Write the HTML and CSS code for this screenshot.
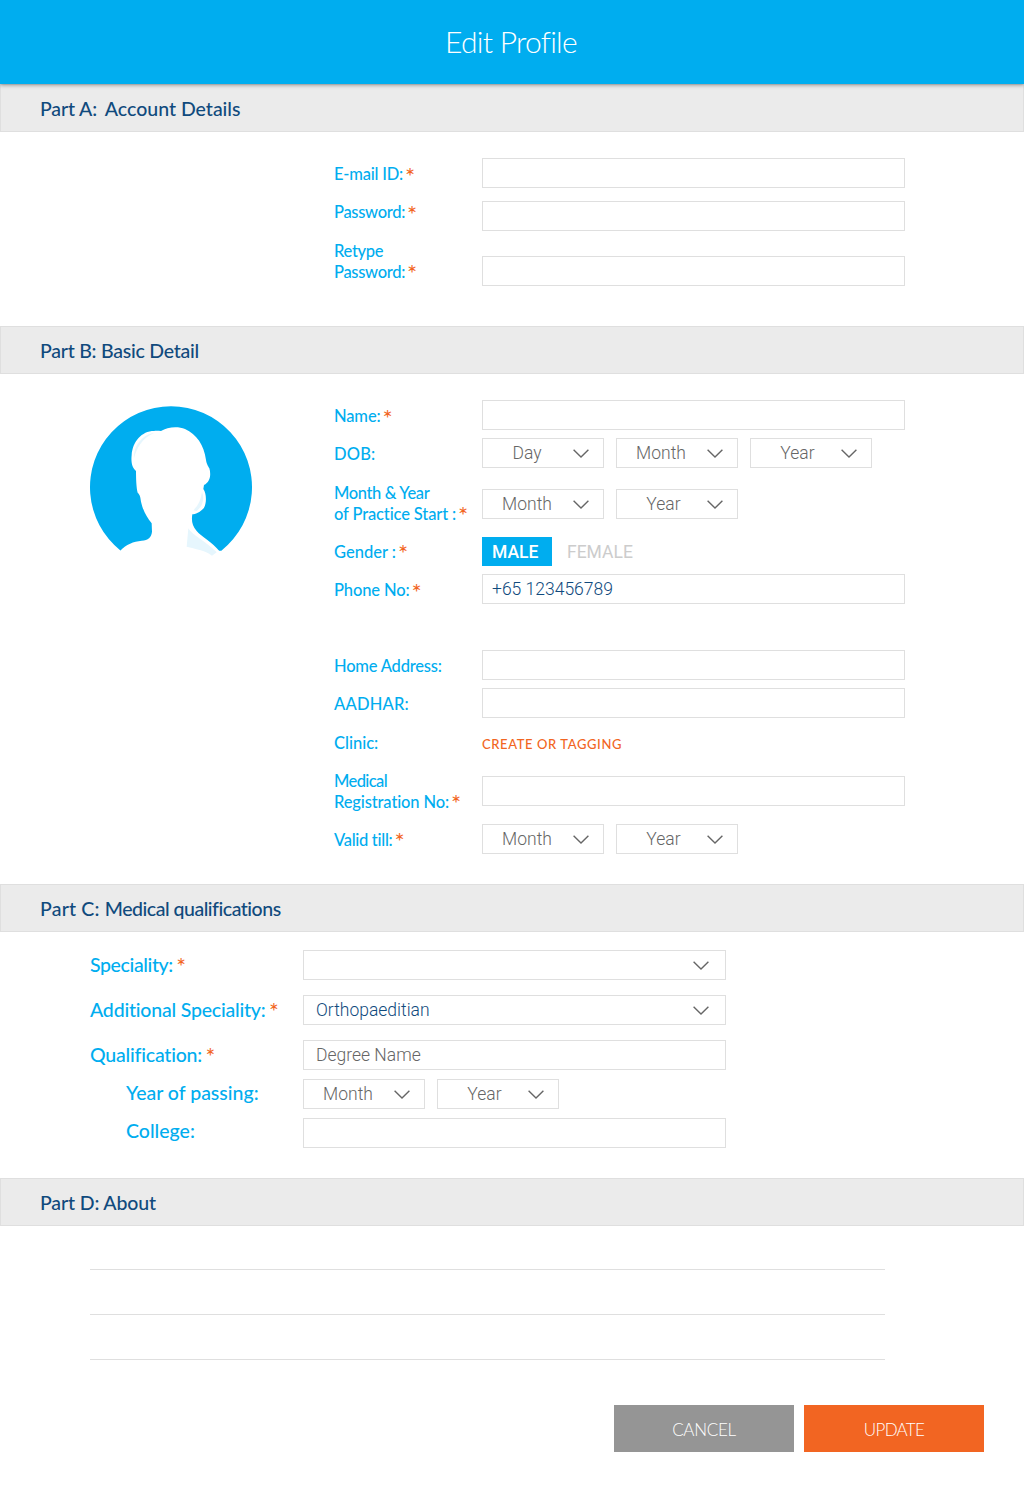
FILE: index.html
```html
<!DOCTYPE html>
<html lang="en">
<head>
<meta charset="utf-8">
<title>Edit Profile</title>
<link rel="stylesheet" href="styles.css">
</head>
<body>
<svg class="defs" width="0" height="0"><symbol id="chev" viewBox="0 0 16 9"><path d="M.6.8 8 8 15.4.8" fill="none" stroke="#666" stroke-width="1.4"/></symbol></svg>
<header class="top"><h1>Edit Profile</h1></header>
<main>
<h2 class="bar"><span class="t1">Part A: </span><span class="account">Account Details</span></h2>
<section class="body part-a">
  <div class="labels">
    <label><span class="t2">E-mail ID:</span><i>*</i></label>
    <label><span class="t3">Password:</span><i>*</i></label>
    <label><span class="t3">Retype</span><br><span class="t3">Password:</span><i>*</i></label>
  </div>
  <div class="controls">
    <div class="box"></div>
    <div class="box g13"></div>
    <div class="box g25"></div>
  </div>
</section>
<h2 class="bar tight">Part B: Basic Detail</h2>
<section class="body part-b">
  <svg class="avatar" viewBox="30 33 486 486"><path fill="#00adef" d="M122 467A243 243 0 1 1 424 467Z"/><path fill="#fff" d="M118 470C140 446 160 440 185 437 205 435 214 428 216 410L215 385C200 365 190 350 183 320 181 305 180 300 173 293 169 280 168 250 168 228 155 218 153 200 155 180 158 140 185 108 222 108 230 107 236 108 243 108 262 95 295 93 315 102 350 118 372 150 378 195 380 208 384 212 388 220 394 240 390 262 372 270L370 282C380 295 380 325 372 338 362 352 345 358 337 358 334 375 336 392 350 408 365 426 395 440 420 470Z"/><path fill="#e6f6fd" d="M325 400C335 420 380 440 410 472L396 482C375 465 345 462 320 455ZM366 290Q378 325 350 348L340 346Q362 325 366 290ZM162 190C160 150 190 118 222 114 185 130 170 160 162 190Z"/></svg>
  <div class="labels">
    <label><span class="t1">Name:</span><i>*</i></label>
    <label><span class="w1">DOB:</span></label>
    <label><span class="t4">Month &amp; Year</span><br><span class="t1">of Practice Start :</span><i>*</i></label>
    <label>Gender :<i>*</i></label>
    <label><span class="t1">Phone No:</span><i>*</i></label>
    <label class="skip"><span class="t2">Home Address:</span></label>
    <label><span class="w1">AADHAR:</span></label>
    <label>Clinic:</label>
    <label><span class="t5">Medical</span><br><span class="t1">Registration No:</span><i>*</i></label>
    <label><span class="t3">Valid till:</span><i>*</i></label>
  </div>
  <div class="controls">
    <div class="box"></div>
    <div class="picks g8"><div class="pick"><span>Day</span><svg><use href="#chev"/></svg></div><div class="pick"><span>Month</span><svg><use href="#chev"/></svg></div><div class="pick year"><span>Year</span><svg><use href="#chev"/></svg></div></div>
    <div class="picks g21"><div class="pick"><span>Month</span><svg><use href="#chev"/></svg></div><div class="pick year"><span>Year</span><svg><use href="#chev"/></svg></div></div>
    <div class="gender g18"><b>MALE</b><span>FEMALE</span></div>
    <div class="box g8 phone low">+65 123456789</div>
    <div class="box g46"></div>
    <div class="box g8"></div>
    <a class="create">CREATE OR TAGGING</a>
    <div class="box"></div>
    <div class="picks g18"><div class="pick low"><span>Month</span><svg><use href="#chev"/></svg></div><div class="pick year low"><span>Year</span><svg><use href="#chev"/></svg></div></div>
  </div>
</section>
<h2 class="bar"><span class="w1">Part C: </span><span class="medical">Medical qualifications</span></h2>
<section class="body part-c">
  <div class="labels big">
    <label><span class="t4">Speciality:</span><i>*</i></label>
    <label><span class="t2">Additional Speciality:</span><i>*</i></label>
    <label><span class="t2">Qualification:</span><i>*</i></label>
    <label class="sub">Year of passing:</label>
    <label class="sub">College:</label>
  </div>
  <div class="controls">
    <div class="box wide"><svg><use href="#chev"/></svg></div>
    <div class="box wide g15 navy">Orthopaeditian<svg><use href="#chev"/></svg></div>
    <div class="box wide g15 low">Degree Name</div>
    <div class="picks g9"><div class="pick"><span>Month</span><svg><use href="#chev"/></svg></div><div class="pick year"><span>Year</span><svg><use href="#chev"/></svg></div></div>
    <div class="box g9"></div>
  </div>
</section>
<h2 class="bar about-bar">Part D: About</h2>
<section class="about"><div class="line"></div><div class="line"></div><div class="line"></div></section>
<div class="actions"><button class="cancel">CANCEL</button><button class="update">UPDATE</button></div>
</main>
</body>
</html>
```
FILE: styles.css
```css
*{box-sizing:border-box}
body{margin:0;background:#fff;font-family:Lato,sans-serif;width:1024px}
.defs{position:absolute}
.top{height:84px;background:#00adef;color:#fff;display:flex;justify-content:center;position:relative;box-shadow:0 1px 4px rgba(0,0,0,.4)}
h1{margin:0;font-weight:300;font-size:30px;line-height:82px;letter-spacing:-.74px;padding-right:2px}
.bar{margin:0;height:48px;border:1px solid #dfdfdf;background:#ebebeb;color:#104a7d;font-size:19.5px;font-weight:500;line-height:48px;padding-left:39px;white-space:pre}
.tight{letter-spacing:-.24px}
.about-bar{letter-spacing:-.13px}
.account{margin-left:3px}
.medical{letter-spacing:-.48px}
.body{display:flex}
.part-a{height:194px;padding:26px 0 0 334px}
.part-b{height:510px;padding:26px 0 0 90px}
.part-c{height:246px;padding:18px 0 0 90px}
.labels{width:148px;flex:none;display:flex;flex-direction:column;gap:17.2px;color:#00adef;font-size:16.5px;font-weight:500;line-height:21px;white-space:nowrap;padding-top:6.3px}
.skip{margin-top:38px}
.labels i{font-style:normal;font-weight:400;font-size:24px;line-height:0;vertical-align:-4.5px;color:#f26522;margin-left:2px}
.t1{letter-spacing:-.13px}
.t2{letter-spacing:-.2px}
.t3{letter-spacing:-.3px}
.t4{letter-spacing:-.38px}
.t5{letter-spacing:-.6px}
.w1{letter-spacing:.2px}
.avatar{width:162px;height:162px;margin:6px 82px 0 0;flex:none}
.controls{width:423px;display:flex;flex-direction:column}
.box{height:30px;flex:none;border:1px solid #dfdfdf;font:300 17.5px/28px Roboto,sans-serif;color:#666;padding-left:12px;display:flex;align-items:center}
.wide svg{margin-left:auto;margin-right:16px}
svg:not([class]){width:16px;height:9px;flex:none}
.phone{padding-left:9px}
.phone,.navy{color:#104a7d}
.g8{margin-top:8px}
.g9{margin-top:9px}
.g13{margin-top:13px}
.g15{margin-top:15px}
.g18{margin-top:18px}
.g21{margin-top:21px}
.g25{margin-top:25px}
.g46{margin-top:46px}
.picks{display:flex;gap:12px}
.pick{width:122px;height:30px;border:1px solid #dfdfdf;display:flex;align-items:center;font:300 17.5px/28px Roboto,sans-serif;color:#666}
.pick span{width:90px;text-align:center;padding-right:2px}
.pick.year span{padding:0 0 0 3px}
.low{line-height:30px}
.gender{height:29px;display:flex;font:400 17.5px/30px Roboto,sans-serif;color:#ccc}
.gender b{width:70px;background:#00adef;color:#fff;padding-left:10px;font-weight:500;margin-right:15px}
.create{height:58px;line-height:52px;font-size:13px;font-weight:500;letter-spacing:.6px;color:#f26522}
.labels.big{width:213px;font-size:19.5px;line-height:24px;gap:21px;padding-top:3px}
.labels.big i{margin-left:3.5px;font-size:23px;vertical-align:-3px}
.sub{margin-left:36px;margin-top:-7px}
.about{padding-left:90px}
.line{width:795px;height:45px;border-bottom:1px solid #dfdfdf}
.line:first-child{height:44px}
.actions{display:flex;gap:10px;margin:45px 0 37px 614px}
button{width:180px;height:47px;border:0;padding:2px 0 0;color:#fff;font:300 17px/45px Lato,sans-serif;letter-spacing:-.3px}
.cancel{background:#959595}
.update{background:#f26522;letter-spacing:-.7px}
```
